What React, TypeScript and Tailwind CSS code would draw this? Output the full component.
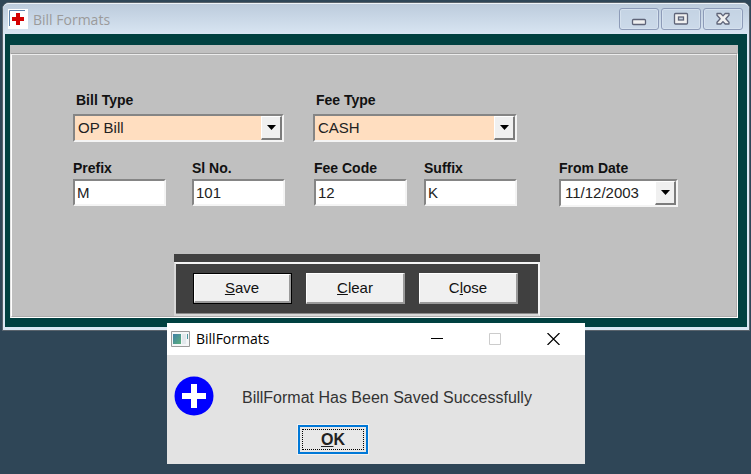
import { useId, type ReactNode } from "react";

const sunken =
  "border-2 border-t-[#858585] border-l-[#858585] border-b-[#f4f4f4] border-r-[#f4f4f4]";

function Arrow() {
  return (
    <span className="flex h-full w-[21px] shrink-0 items-center justify-center border-t border-l border-r-2 border-b-2 border-t-white border-l-white border-r-[#7c7c7c] border-b-[#7c7c7c] bg-[#f0f0f0]">
      <svg width="9" height="5" viewBox="0 0 9 5" aria-hidden="true">
        <path d="M0 0H9L4.5 5Z" fill="#000" />
      </svg>
    </span>
  );
}

function ComboField({ label, value, width }: { label: string; value: string; width: string }) {
  const id = useId();
  return (
    <div className={`flex flex-col gap-[6px] ${width}`}>
      <label htmlFor={id} className="pl-[3px] text-[14px] leading-4 font-bold">
        {label}
      </label>
      <div className={`flex h-7 bg-[#ffdec0] ${sunken}`}>
        <select
          id={id}
          defaultValue={value}
          className="min-w-0 flex-1 appearance-none bg-transparent pl-[3px] text-[15px] text-[#222] outline-none"
        >
          <option>{value}</option>
        </select>
        <Arrow />
      </div>
    </div>
  );
}

function TextField({ label, value }: { label: string; value: string }) {
  const id = useId();
  return (
    <div className="flex w-[93px] flex-col gap-[3px]">
      <label htmlFor={id} className="text-[14px] leading-4 font-bold whitespace-nowrap">
        {label}
      </label>
      <input
        id={id}
        defaultValue={value}
        className={`h-[27px] w-full bg-white pl-[2px] text-[15px] text-[#222] outline-none ${sunken}`}
      />
    </div>
  );
}

function DateField({ label, value }: { label: string; value: string }) {
  const id = useId();
  return (
    <div className="flex w-[119px] flex-col gap-[3px]">
      <label htmlFor={id} className="text-[14px] leading-4 font-bold">
        {label}
      </label>
      <div className={`flex h-7 bg-white ${sunken}`}>
        <input
          id={id}
          defaultValue={value}
          className="w-0 min-w-0 flex-1 bg-transparent pt-px pl-[4px] text-[15px] text-[#222] outline-none"
        />
        <button type="button" aria-label="Open calendar" className="h-full">
          <Arrow />
        </button>
      </div>
    </div>
  );
}

function PushButton({ children, isDefault = false }: { children: ReactNode; isDefault?: boolean }) {
  return (
    <button
      type="button"
      className={`flex h-[31px] w-[99px] ${isDefault ? "border border-black" : ""}`}
    >
      <span className="flex h-full w-full items-center justify-center border-t border-l border-r-2 border-b-2 border-t-white border-l-white border-r-[#9a9a9a] border-b-[#9a9a9a] bg-[#f0f0f0] pt-px text-[15px] text-[#111]">
        <span>{children}</span>
      </span>
    </button>
  );
}

function FrameButton({ label, children }: { label: string; children: ReactNode }) {
  return (
    <button
      type="button"
      aria-label={label}
      className="flex h-[22px] w-10 items-center justify-center rounded-[3px] border border-[#8d9bb8] bg-[#c7d6e6]/60 shadow-[inset_0_0_0_1px_#d5e1ee]"
    >
      <svg width="16" height="14" viewBox="0 0 16 14" fill="none" aria-hidden="true">
        {children}
      </svg>
    </button>
  );
}

export default function App() {
  return (
    <div className="relative min-h-screen bg-[#2f4657] pt-[2px] pr-px pl-[2px] font-['Liberation_Sans',Arial,sans-serif] text-[#111]">
      <main className="rounded-t-[7px] border border-[#59636c] bg-[#dbe7f3] pr-[2px] pb-[3px] pl-[2px]">
        <header className="-mx-[2px] flex h-[31px] items-center rounded-t-[6px] border-t border-[#eef3f8] bg-linear-to-b from-[#bccbdc] to-[#d8e5f2] pr-[6px] pl-[5px]">
          <svg width="20" height="20" viewBox="0 0 20 20" aria-hidden="true">
            <path d="M0 0H20V20H0Z" fill="#fff" />
            <path d="M1.5 17V1.5H17" fill="none" stroke="#5f84ad" />
            <path d="M8 4H12V8H16V12H12V16H8V12H4V8H8Z" fill="#d40000" />
          </svg>
          <h1 className="grow pt-px pl-[5px] font-['Open_Sans',sans-serif] text-[14px] leading-5 text-[#9b9b9b]">
            Bill Formats
          </h1>
          <div className="flex gap-[2px]">
            <FrameButton label="Minimize">
              <rect x="1.5" y="7.5" width="13" height="5" rx="1" fill="#f0f0f0" stroke="#5f6478" strokeWidth="1.3" />
            </FrameButton>
            <FrameButton label="Maximize">
              <rect x="1.5" y="1.5" width="13" height="10.5" rx="1" fill="#f0f0f0" stroke="#5f6478" strokeWidth="1.3" />
              <rect x="5.5" y="5" width="5" height="3" fill="#c5d2e0" stroke="#5f6478" strokeWidth="1.3" />
            </FrameButton>
            <FrameButton label="Close">
              <path
                d="M2 1.5H5.8L8 3.9L10.2 1.5H14V3.2L10.8 6.7L14 10.2V12H10.2L8 9.6L5.8 12H2V10.2L5.2 6.7L2 3.2Z"
                fill="#f0f0f0"
                stroke="#5f6478"
                strokeWidth="1.3"
                strokeLinejoin="round"
              />
            </FrameButton>
          </div>
        </header>

        <div className="bg-[#004040] pt-[11px] pr-[9px] pb-[9px] pl-[5px]">
          <div className="bg-[#c0c0c0] pt-2">
            <form
              className="border border-t-[#a0a0a0] border-r-white border-b-white border-l-[#e2e2e2]"
              onSubmit={(event) => event.preventDefault()}
            >
              <div className="border border-t-[#ececec] border-r-[#adadad] border-b-[#adadad] border-l-white pt-[37px] pl-[61px]">
                <div className="flex gap-[29px]">
                  <ComboField label="Bill Type" value="OP Bill" width="w-[211px]" />
                  <ComboField label="Fee Type" value="CASH" width="w-[204px]" />
                </div>

                <div className="mt-[18px] flex">
                  <div className="flex gap-[26px]">
                    <TextField label="Prefix" value="M" />
                    <TextField label="Sl No." value="101" />
                  </div>
                  <div className="ml-[29px] flex gap-[17px]">
                    <TextField label="Fee Code" value="12" />
                    <TextField label="Suffix" value="K" />
                  </div>
                  <div className="ml-[42px]">
                    <DateField label="From Date" value="11/12/2003" />
                  </div>
                </div>

                <div className="mt-[47px] ml-[101px] w-[366px] bg-[#404040] pt-2">
                  <div className="border-2 border-t-[#f4f4f4] border-r-[#f4f4f4] border-b-[#d8d8d8] border-l-[#d8d8d8]">
                    <div className="flex gap-[14px] border-b border-[#8a8a8a] py-[9px] pl-[17px]">
                      <PushButton isDefault>
                        <u>S</u>ave
                      </PushButton>
                      <PushButton>
                        <u>C</u>lear
                      </PushButton>
                      <PushButton>
                        C<u>l</u>ose
                      </PushButton>
                    </div>
                  </div>
                </div>
              </div>
            </form>
          </div>
        </div>
      </main>

      <section
        role="dialog"
        aria-labelledby="message-title"
        className="absolute top-[323px] left-[167px] w-[418px] bg-[#e3e3e3] pb-[10px]"
      >
        <header className="flex h-8 items-center bg-white pr-[25px] pl-1">
          <svg width="19" height="16" viewBox="0 0 19 16" aria-hidden="true">
            <defs>
              <linearGradient id="form-icon" x1="0" y1="0" x2="1" y2="1">
                <stop offset="0" stopColor="#3f7fa6" />
                <stop offset="1" stopColor="#5cb07c" />
              </linearGradient>
            </defs>
            <path d="M.5 .5H18.5V15.5H.5Z" fill="#f4f6f7" stroke="#9b9b9b" />
            <path d="M2 3H10V13H2Z" fill="url(#form-icon)" />
            <path d="M11 3H15V13H11Z" fill="#e2e8ec" />
            <path d="M16 3H17V8H16Z" fill="#4b97a0" />
          </svg>
          <h2
            id="message-title"
            className="grow pl-[6px] font-['Open_Sans',sans-serif] text-[14px] leading-5 text-black"
          >
            BillFormats
          </h2>
          <div className="flex gap-[46px]">
            <button type="button" aria-label="Minimize">
              <svg width="12" height="12" viewBox="0 0 12 12" aria-hidden="true">
                <path d="M0 5.5H12" stroke="#000" />
              </svg>
            </button>
            <button type="button" aria-label="Maximize" disabled>
              <svg width="12" height="12" viewBox="0 0 12 12" aria-hidden="true">
                <path d="M.5 .5H11.5V11.5H.5Z" fill="none" stroke="#ccc" />
              </svg>
            </button>
            <button type="button" aria-label="Close">
              <svg width="13" height="12" viewBox="0 0 13 12" aria-hidden="true">
                <path d="M.5 0L12.5 12M12.5 0L.5 12" stroke="#000" strokeWidth="1.2" />
              </svg>
            </button>
          </div>
        </header>
        <div className="flex items-center gap-[28px] pt-[21px] pl-[7px]">
          <svg width="40" height="40" viewBox="0 0 40 40" aria-hidden="true">
            <circle cx="20" cy="20" r="19.5" fill="#0000ff" />
            <path d="M17 8H23V17H32V23H23V32H17V23H8V17H17Z" fill="#fff" />
          </svg>
          <p className="pt-1 text-[16px] leading-5 whitespace-nowrap text-[#333]">
            BillFormat Has Been Saved Successfully
          </p>
        </div>
        <button
          type="button"
          className="mt-[9px] ml-[131px] flex h-[29px] w-[70px] border-2 border-[#0078d7] bg-[#e8e8e8] p-[2px] outline outline-[#f2f2f2]"
        >
          <span className="flex h-full w-full items-center justify-center border border-dotted border-black text-[16px] leading-4 font-bold text-[#222]">
            <span>
              <u>O</u>K
            </span>
          </span>
        </button>
      </section>
    </div>
  );
}
